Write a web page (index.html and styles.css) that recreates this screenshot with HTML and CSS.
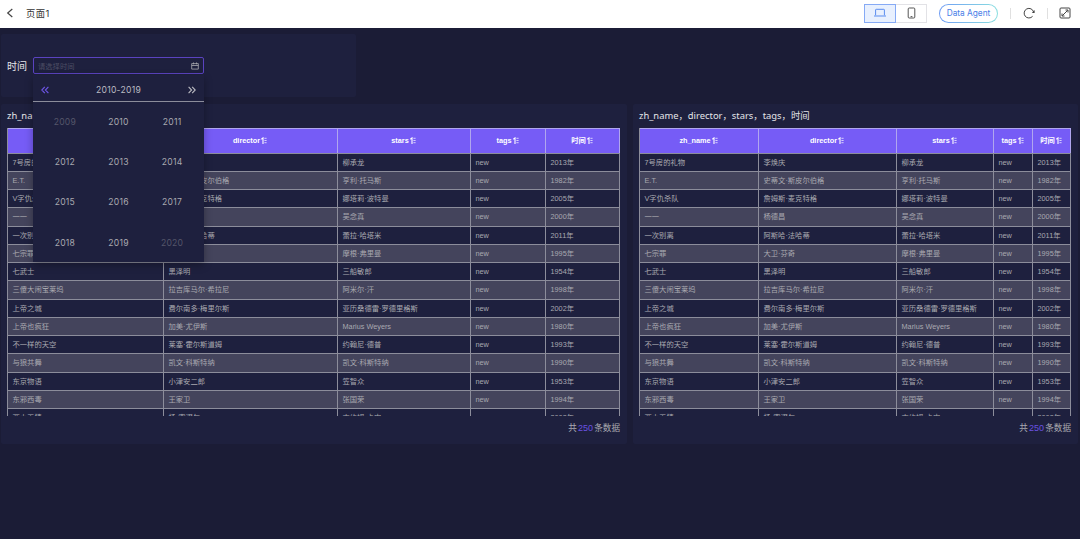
FILE: index.html
```html
<!DOCTYPE html>
<html lang="zh-CN">
<head>
    <meta charset="UTF-8">
    <meta name="viewport" content="width=device-width, initial-scale=1.0">
    <title>页面1</title>
    <link rel="stylesheet" href="styles.css">
</head>
<body>

    <!-- Top bar -->
    <header class="topbar">
        <svg class="back" viewBox="0 0 8 10"><path d="M6.3 1 1.7 5l4.6 4"/></svg>
        <span class="page-name">页面1</span>
        <div class="device-switch">
            <button type="button" class="device active">
                <svg width="14" height="10" viewBox="0 0 14 10"><path d="M2.6 7.3V1.9q0-.6.6-.6h7.6q.6 0 .6.6v5.4M1 8h12"/></svg>
            </button>
            <button type="button" class="device">
                <svg width="9" height="12" viewBox="0 0 9 12"><rect x="1.2" y="1" width="6.6" height="10" rx="1"/><path d="M3.6 9.6h1.8"/></svg>
            </button>
        </div>
        <button type="button" class="agent">Data Agent</button>
        <span class="divider"></span>
        <svg class="refresh" viewBox="0 0 12 12"><path d="M9.6 9.3A4.8 4.8 0 1 1 10.6 5"/><path class="tip" d="M11.6 3v3H8.8z"/></svg>
        <span class="divider"></span>
        <svg class="expand" viewBox="0 0 12 12"><rect x="1" y="1" width="10" height="10" rx="1"/><path d="M3.3 8.7 8.7 3.3M6.5 3h2.5v2.5M3 6.5v2.5h2.5"/></svg>
    </header>

    <main class="board">
        <!-- Time filter -->
        <section class="panel filter">
            <label class="filter-label">时间</label>
            <div class="picker">
                <span class="placeholder">请选择时间</span>
                <svg class="calendar" viewBox="0 0 8 8"><path d="M.7 1.6h6.6v5.5H.7zM.7 3.5h6.6M2.5.5v1.8M5.5.5v1.8"/></svg>

                <!-- Year dropdown -->
                <div class="dropdown">
                    <div class="dropdown-head">
                        <svg class="prev" viewBox="0 0 8 8"><path d="M3.8.8.8 4l3 3.2M7.4.8l-3 3.2 3 3.2"/></svg>
                        <span>2010-2019</span>
                        <svg class="next" viewBox="0 0 8 8"><path d="m.6.8 3 3.2-3 3.2M4.2.8l3 3.2-3 3.2"/></svg>
                    </div>
                    <div class="years">
                        <span class="out">2009</span><span>2010</span><span>2011</span>
                        <span>2012</span><span>2013</span><span>2014</span>
                        <span>2015</span><span>2016</span><span>2017</span>
                        <span>2018</span><span>2019</span><span class="out">2020</span>
                    </div>
                </div>
            </div>
        </section>

        <!-- Tables -->
        <div class="tables">
            <section class="panel">
                <h3 class="panel-title">zh_name，director，stars，tags，时间</h3>
                <div class="table wide"></div>
                <p class="total">共<b>250</b>条数据</p>
            </section>
            <section class="panel">
                <h3 class="panel-title">zh_name，director，stars，tags，时间</h3>
                <div class="table narrow"></div>
                <p class="total">共<b>250</b>条数据</p>
            </section>
        </div>
    </main>

    <script src="script.js"></script>
</body>
</html>
```
FILE: styles.css
```css
* {
    box-sizing: border-box;
}
body {
    margin: 0;
    height: 539px;
    overflow: hidden;
    font-family: "Liberation Sans", "Noto Sans CJK SC", sans-serif;
    background: #1b1c36;
    color: #a9a9b0;
}
svg {
    display: block;
    flex: none;
    fill: none;
    stroke: currentColor;
    stroke-width: 1;
}
button {
    font-family: inherit;
    padding: 0;
    background: #fff;
}
.topbar {
    display: flex;
    align-items: center;
    height: 28px;
    padding: 0 9px 2px 6px;
    background: #fff;
    color: #444;
}
.back {
    width: 8px;
    height: 10px;
    stroke-width: 1.2;
}
.page-name {
    margin-left: 12px;
    font-family: Inter, "Noto Sans CJK SC", sans-serif;
    font-size: 9.3px;
    letter-spacing: .4px;
    color: #333;
}
.device-switch {
    display: flex;
    margin-left: auto;
}
.device {
    display: flex;
    align-items: center;
    justify-content: center;
    width: 31px;
    height: 19px;
    border: 1px solid #e2e2e6;
    border-left: none;
    color: #555;
}
.device.active {
    width: 32px;
    border: 1px solid #86aaf5;
    background: #e8f0fe;
    color: #5b8def;
}
.agent {
    width: 59px;
    height: 19px;
    margin: 0 12px;
    border: 1px solid transparent;
    border-radius: 10px;
    background: linear-gradient(#fff, #fff) padding-box, linear-gradient(90deg, #6f9cf4, #8adfe0) border-box;
    font-family: Inter, sans-serif;
    font-size: 8.3px;
    color: #4a80e8;
}
.divider {
    width: 1px;
    height: 11px;
    background: #e0e0e0;
}
.refresh {
    width: 12px;
    height: 12px;
    margin: 0 12px;
}
.refresh .tip {
    fill: currentColor;
    stroke: none;
}
.expand {
    width: 12px;
    height: 12px;
    margin-left: 11px;
}
.board {
    padding: 6px 2px 0 1px;
}
.panel {
    background: #1e203e;
    border-radius: 2px;
}
.filter {
    display: flex;
    align-items: center;
    width: 355px;
    height: 63px;
    padding-left: 6px;
}
.filter-label {
    width: 26px;
    font-size: 10px;
    color: #e4e4e8;
}
.picker {
    position: relative;
    display: flex;
    align-items: center;
    justify-content: space-between;
    width: 171px;
    height: 17px;
    padding: 0 4px;
    border: 1px solid #5a43c0;
    border-radius: 2px;
    font-size: 7.3px;
}
.placeholder {
    color: #4d4e64;
}
.calendar {
    width: 8px;
    height: 8px;
    stroke-width: .8;
}
.dropdown {
    position: absolute;
    top: 17px;
    left: -1px;
    z-index: 2;
    width: 171px;
    height: 187px;
    background: #1e203e;
    box-shadow: 0 3px 8px rgba(0, 0, 0, .3);
    font-family: Inter, sans-serif;
    font-size: 8.6px;
    letter-spacing: .25px;
}
.dropdown-head {
    display: flex;
    align-items: center;
    justify-content: space-between;
    height: 27px;
    padding: 3px 8px 0;
    border-bottom: 1px solid #8c8d9b;
    color: #bbbbc2;
}
.prev, .next {
    width: 8px;
    height: 8px;
    stroke-width: 1.1;
}
.prev {
    color: #6f56ea;
}
.years {
    display: grid;
    grid-template-columns: repeat(3, 53.6px);
    grid-auto-rows: 40.2px;
    justify-content: center;
    place-items: center;
}
.years .out {
    color: #55566a;
}
.tables {
    display: grid;
    grid-template-columns: 626px 445px;
    gap: 6px;
    margin-top: 7px;
}
.tables .panel {
    height: 340px;
    padding: 0 7px 0 6px;
}
.panel-title {
    margin: 0;
    height: 24px;
    line-height: 24px;
    font-family: "Noto Sans", "Noto Sans CJK SC", sans-serif;
    font-size: 9.4px;
    font-weight: 400;
    color: #e4e4e8;
}
.table {
    height: 288px;
    overflow: hidden;
    border-left: 1px solid #8c8d9b;
    font-size: 7.3px;
}
.row {
    display: grid;
    height: 18.27px;
    border-top: 1px solid #8c8d9b;
}
.wide .row {
    grid-template-columns: 156px 174px 133px 75px 74px;
}
.narrow .row {
    grid-template-columns: 119px 138px 97px 39px 38px;
}
.row span {
    padding-left: 4.5px;
    border-right: 1px solid #8c8d9b;
    line-height: 17px;
    white-space: nowrap;
}
.row:nth-child(odd) {
    background: #44445c;
}
.row.head {
    height: 24.5px;
    background: #765cf6;
    border-color: #b0a6ee;
    color: #fff;
    font-weight: 700;
}
.head span {
    display: flex;
    align-items: center;
    justify-content: center;
    padding: 0 1px 0 0;
    border-color: #b0a6ee;
}
.sort {
    width: 6px;
    height: 7px;
    margin: 0 0 1px 1px;
    stroke-width: .7;
}
.sort .arrow {
    stroke-width: 1.1;
}
.total {
    margin: 0;
    padding-top: 5px;
    line-height: 15px;
    text-align: right;
    font-size: 8.6px;
}
.total b {
    margin: 0 1px;
    font-size: 9px;
    font-weight: 400;
    letter-spacing: .1px;
    color: #6a52e0;
}
```
FILE: script.js
```javascript
const columns = ["zh_name", "director", "stars", "tags", "时间"];
const movies = [
    ["7号房的礼物", "李焕庆", "柳承龙", "new", "2013年"],
    ["E.T.", "史蒂文·斯皮尔伯格", "亨利·托马斯", "new", "1982年"],
    ["V字仇杀队", "詹姆斯·麦克特格", "娜塔莉·波特曼", "new", "2005年"],
    ["一一", "杨德昌", "吴念真", "new", "2000年"],
    ["一次别离", "阿斯哈·法哈蒂", "蕾拉·哈塔米", "new", "2011年"],
    ["七宗罪", "大卫·芬奇", "摩根·弗里曼", "new", "1995年"],
    ["七武士", "黑泽明", "三船敏郎", "new", "1954年"],
    ["三傻大闹宝莱坞", "拉吉库马尔·希拉尼", "阿米尔·汗", "new", "1998年"],
    ["上帝之城", "费尔南多·梅里尔斯", "亚历桑德雷·罗德里格斯", "new", "2002年"],
    ["上帝也疯狂", "加美·尤伊斯", "Marius Weyers", "new", "1980年"],
    ["不一样的天空", "莱塞·霍尔斯道姆", "约翰尼·德普", "new", "1993年"],
    ["与狼共舞", "凯文·科斯特纳", "凯文·科斯特纳", "new", "1990年"],
    ["东京物语", "小津安二郎", "笠智众", "new", "1953年"],
    ["东邪西毒", "王家卫", "张国荣", "new", "1994年"],
    ["两小无猜", "杨·塞谬尔", "吉约姆·卡内", "new", "2003年"]
];

const sortIcon = '<svg class="sort" viewBox="0 0 6 7"><path class="arrow" d="M.3 2.2 2 .9v6"/><path d="M3.4 1.3h2.2M3.4 3.5h2.2M3.4 5.7h2.2"/></svg>';

document.querySelectorAll(".table").forEach(function(table) {
    let html = '<div class="row head">' + columns.map(c => `<span>${c}${sortIcon}</span>`).join("") + "</div>";
    movies.forEach(function(movie) {
        html += '<div class="row">' + movie.map(v => `<span>${v}</span>`).join("") + "</div>";
    });
    table.innerHTML = html;
});
```
